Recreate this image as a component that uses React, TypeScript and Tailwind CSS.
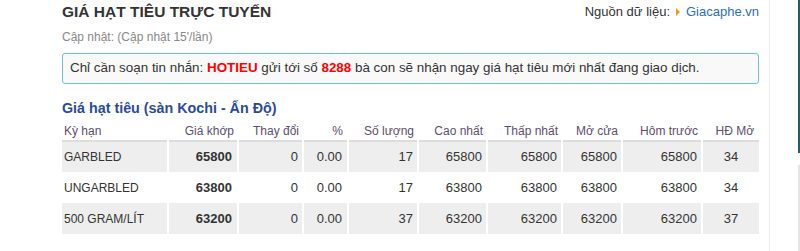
import React from "react";

type Row = {
  name: string;
  price: string;
  change: string;
  pct: string;
  qty: string;
  high: string;
  low: string;
  open: string;
  prev: string;
  oi: string;
};

const rows: Row[] = [
  { name: "GARBLED", price: "65800", change: "0", pct: "0.00", qty: "17", high: "65800", low: "65800", open: "65800", prev: "65800", oi: "34" },
  { name: "UNGARBLED", price: "63800", change: "0", pct: "0.00", qty: "17", high: "63800", low: "63800", open: "63800", prev: "63800", oi: "34" },
  { name: "500 GRAM/LÍT", price: "63200", change: "0", pct: "0.00", qty: "37", high: "63200", low: "63200", open: "63200", prev: "63200", oi: "37" },
];

export default function App() {
  return (
    <div className="w-[800px] h-[251px] bg-white flex overflow-hidden text-[#333]" style={{ fontFamily: '"Liberation Sans", Arial, sans-serif' }}>
      <div className="w-[769px] pl-[62px] pr-[10px] shrink-0">
        {/* Title row */}
        <div className="flex items-start justify-between pt-[2px]">
          <h1 className="text-[15.5px] leading-[20px] font-bold text-[#333]">GIÁ HẠT TIÊU TRỰC TUYẾN</h1>
          <div className="text-[13px] leading-[20px] text-[#333] flex items-center">
            Nguồn dữ liệu:
            <span className="mx-[6px] inline-block w-0 h-0 border-y-[4px] border-y-transparent border-l-[4px] border-l-[#f7941d]" />
            <span className="text-[#2a6fb5]">Giacaphe.vn</span>
          </div>
        </div>
        <div className="text-[12px] leading-[14px] text-[#888] mt-[8px]">Cập nhật: (Cập nhật 15'/lần)</div>

        {/* Notice box */}
        <div className="mt-[9px] h-[31px] border border-[#6cc3e0] rounded-[3px] bg-[#f9f9f9] pl-[7px] flex items-center text-[13.4px]">
          Chỉ cần soạn tin nhắn:&nbsp;<b className="text-[#f00]">HOTIEU</b>&nbsp;gửi tới số&nbsp;<b className="text-[#f00]">8288</b>&nbsp;bà con sẽ nhận ngay giá hạt tiêu mới nhất đang giao dịch.
        </div>

        <h2 className="mt-[15px] text-[14.3px] leading-[18px] font-bold text-[#2a4b9b]">Giá hạt tiêu (sàn Kochi - Ấn Độ)</h2>

        <table className="mt-[4px] w-[697px] border-collapse text-[13px] table-fixed">
          <colgroup>
            <col className="w-[106px]" />
            <col className="w-[70px]" />
            <col className="w-[65px]" />
            <col className="w-[45px]" />
            <col className="w-[70px]" />
            <col className="w-[69px]" />
            <col className="w-[75px]" />
            <col className="w-[60px]" />
            <col className="w-[80px]" />
            <col className="w-[57px]" />
          </colgroup>
          <thead>
            <tr className="text-[#5b4e6e] text-[12px] border-b-2 border-[#ddd]">
              <th className="font-normal text-left pl-[2px] h-[20px] align-middle">Kỳ hạn</th>
              <th className="font-normal text-right pr-[4px]">Giá khớp</th>
              <th className="font-normal text-right pr-[4px]">Thay đổi</th>
              <th className="font-normal text-right pr-[5px]">%</th>
              <th className="font-normal text-right pr-[4px]">Số lượng</th>
              <th className="font-normal text-right pr-[4px]">Cao nhất</th>
              <th className="font-normal text-right pr-[4px]">Thấp nhất</th>
              <th className="font-normal text-right pr-[4px]">Mở cửa</th>
              <th className="font-normal text-right pr-[4px]">Hôm trước</th>
              <th className="font-normal text-right pr-[5px]">HĐ Mở</th>
            </tr>
          </thead>
          <tbody>
            {rows.map((r, i) => (
              <tr key={r.name} className={i % 2 === 0 ? "bg-[#eeeeee]" : "bg-white"}>
                <td className="h-[31px] pl-[2px] text-left text-[12px] border-r-2 border-white">{r.name}</td>
                <td className="text-right pr-[5px] font-bold border-r-2 border-white">{r.price}</td>
                <td className="text-right pr-[4px] border-r-2 border-white">{r.change}</td>
                <td className="text-right pr-[5px] border-r-2 border-white">{r.pct}</td>
                <td className="text-right pr-[4px] border-r-2 border-white">{r.qty}</td>
                <td className="text-right pr-[4px] border-r-2 border-white">{r.high}</td>
                <td className="text-right pr-[4px] border-r-2 border-white">{r.low}</td>
                <td className="text-right pr-[4px] border-r-2 border-white">{r.open}</td>
                <td className="text-right pr-[4px] border-r-2 border-white">{r.prev}</td>
                <td className="text-center">{r.oi}</td>
              </tr>
            ))}
          </tbody>
        </table>
      </div>

      {/* Right side edge */}
      <div className="w-px bg-[#ececec] shrink-0" />
      <div className="flex-1 flex justify-end">
        <div className="w-[2px] flex flex-col">
          <div className="h-[153px] bg-[#1d5f6b]" />
          <div className="h-[12px]" />
          <div className="flex-1 bg-[#e4e4e4]" />
        </div>
      </div>
    </div>
  );
}
